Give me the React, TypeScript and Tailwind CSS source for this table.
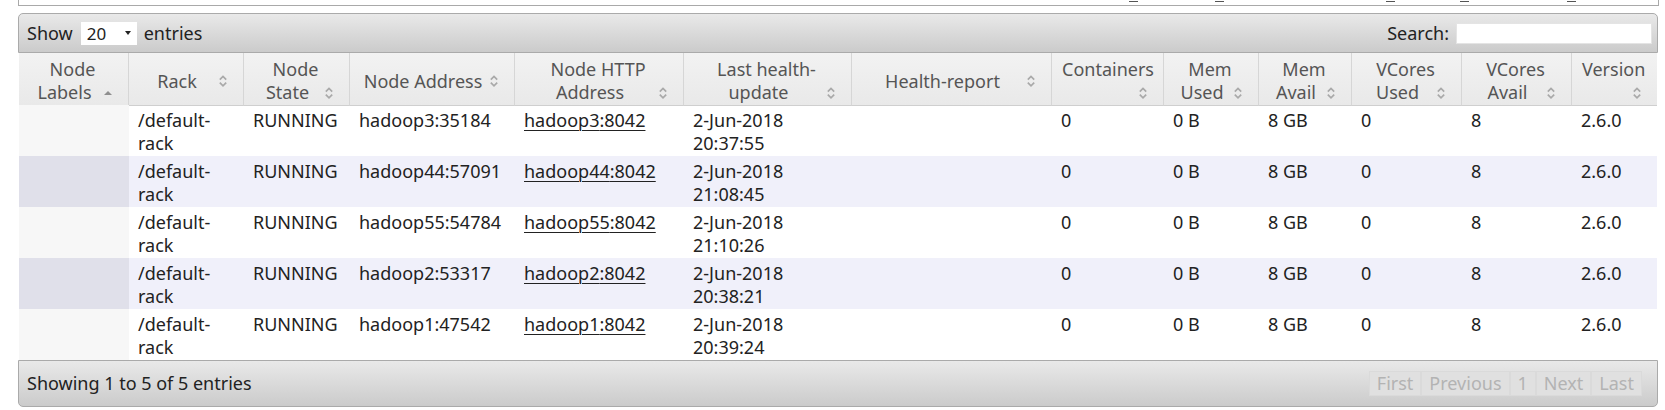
import React from 'react';

type Header = { lines: string[]; iconLine: number; sort?: 'asc' | 'both' };

const headers: Header[] = [
  { lines: ['Node', 'Labels'], iconLine: 1, sort: 'asc' },
  { lines: ['Rack'], iconLine: 0 },
  { lines: ['Node', 'State'], iconLine: 1 },
  { lines: ['Node Address'], iconLine: 0 },
  { lines: ['Node HTTP', 'Address'], iconLine: 1 },
  { lines: ['Last health-', 'update'], iconLine: 1 },
  { lines: ['Health-report'], iconLine: 0 },
  { lines: ['Containers', ''], iconLine: 1 },
  { lines: ['Mem', 'Used'], iconLine: 1 },
  { lines: ['Mem', 'Avail'], iconLine: 1 },
  { lines: ['VCores', 'Used'], iconLine: 1 },
  { lines: ['VCores', 'Avail'], iconLine: 1 },
  { lines: ['Version', ''], iconLine: 1 },
];

const nodes = [
  { host: 'hadoop3', port: '35184', date: '20:37:55' },
  { host: 'hadoop44', port: '57091', date: '21:08:45' },
  { host: 'hadoop55', port: '54784', date: '21:10:26' },
  { host: 'hadoop2', port: '53317', date: '20:38:21' },
  { host: 'hadoop1', port: '47542', date: '20:39:24' },
];

const cols =
  'grid grid-cols-[110px_115px_106px_165px_169px_168px_200px_112px_95px_93px_110px_110px_85px]';

const SortIcon = ({ kind }: { kind: 'asc' | 'both' }) =>
  kind === 'asc' ? (
    <svg width="16" height="16" viewBox="0 0 16 16">
      <path d="M4 10 L8 6 L12 10 Z" fill="#8f8f8f" />
    </svg>
  ) : (
    <svg width="16" height="16" viewBox="0 0 16 16">
      <path d="M4.8 6.6 L8 3.4 L11.2 6.6" fill="none" stroke="#a9a9a9" strokeWidth="1.7" />
      <path d="M4.8 9.6 L8 12.8 L11.2 9.6" fill="none" stroke="#a9a9a9" strokeWidth="1.7" />
    </svg>
  );

const HeaderCell = ({ h, last }: { h: Header; last: boolean }) => (
  <div
    className={`flex flex-col justify-center pl-[10px] pr-[12px] pt-[5px] pb-[1px] border-b border-[#cfcfcf] ${
      last ? '' : 'border-r border-r-[#d6d6d6]'
    }`}
  >
    {h.lines.map((line, i) => (
      <div key={i} className="flex items-center h-[23px]">
        <span className="flex-1 text-center whitespace-nowrap">{line}</span>
        {i === h.iconLine && (
          <span className="w-4 h-4 shrink-0 flex items-center justify-center">
            <SortIcon kind={h.sort ?? 'both'} />
          </span>
        )}
      </div>
    ))}
  </div>
);

const Cell = ({ children, className = '' }: { children?: React.ReactNode; className?: string }) => (
  <div className={`px-[9px] pt-[4px] whitespace-nowrap ${className}`}>{children}</div>
);

export default function App() {
  return (
    <div className="w-[1665px] h-[410px] overflow-hidden bg-white font-['Noto_Sans','Open_Sans',sans-serif] text-[18px] leading-[23px] text-[#222]">
      {/* bottom of the table above, cut off */}
      <div className="relative ml-[18px] w-[1641px] h-[6px] border-x border-b border-[#a9a9a9] bg-white">
        {[1110, 1196, 1367, 1441, 1548].map((x) => (
          <span key={x} className="absolute top-[1px] h-px w-[9px] bg-[#555]" style={{ left: x }} />
        ))}
      </div>

      <div className="ml-[18px] mt-[7px] w-[1640px]">
        {/* toolbar */}
        <div className="flex items-center justify-between h-[40px] pl-[8px] pr-[5px] border border-[#aaa] rounded-t-[5px] bg-gradient-to-b from-[#e9e9e9] to-[#cbcbcb]">
          <div className="flex items-center">
            <span>Show</span>
            <span className="flex items-center justify-between ml-[8px] w-[56px] h-[23px] pl-[6px] pr-[5px] bg-white">
              <span className="text-[17px]">20</span>
              <svg width="8" height="6" viewBox="0 0 8 6">
                <path d="M1 1 L7 1 L4 5 Z" fill="#222" />
              </svg>
            </span>
            <span className="ml-[7px]">entries</span>
          </div>
          <div className="flex items-center">
            <span>Search:</span>
            <span className="ml-[7px] w-[196px] h-[21px] bg-white border border-[#e4e4e4]" />
          </div>
        </div>

        {/* table */}
        <div className="mx-px">
          <div className={`${cols} h-[52px] bg-gradient-to-b from-[#f2f2f2] to-[#e9e9e9] text-[#555]`}>
            {headers.map((h, i) => (
              <HeaderCell key={i} h={h} last={i === headers.length - 1} />
            ))}
          </div>
          {nodes.map((n, i) => {
            const even = i % 2 === 1;
            return (
              <div key={n.host} className={`${cols} h-[51px] ${even ? 'bg-[#f0f0fa]' : 'bg-white'}`}>
                <Cell className={even ? 'bg-[#e0e0ea]' : 'bg-[#f7f7f7]'} />
                <Cell>
                  /default-
                  <br />
                  rack
                </Cell>
                <Cell>RUNNING</Cell>
                <Cell>
                  {n.host}:{n.port}
                </Cell>
                <Cell>
                  <a className="underline underline-offset-[3px] decoration-1 text-[#222]">
                    {n.host}:8042
                  </a>
                </Cell>
                <Cell>
                  2-Jun-2018
                  <br />
                  {n.date}
                </Cell>
                <Cell />
                <Cell>0</Cell>
                <Cell>0 B</Cell>
                <Cell>8 GB</Cell>
                <Cell>0</Cell>
                <Cell>8</Cell>
                <Cell>2.6.0</Cell>
              </div>
            );
          })}
        </div>

        {/* footer */}
        <div className="flex items-center justify-between h-[47px] pl-[8px] pr-[15px] border border-[#aaa] rounded-b-[5px] bg-gradient-to-b from-[#e9e9e9] to-[#cbcbcb]">
          <span>Showing 1 to 5 of 5 entries</span>
          <div className="flex items-center">
            {['First', 'Previous', '1', 'Next', 'Last'].map((b) => (
              <span
                key={b}
                className="px-[7px] h-[25px] flex items-center border border-[#dadada] bg-[#e0e0e0] text-[#b3b3b3]"
              >
                {b}
              </span>
            ))}
          </div>
        </div>
      </div>
    </div>
  );
}
